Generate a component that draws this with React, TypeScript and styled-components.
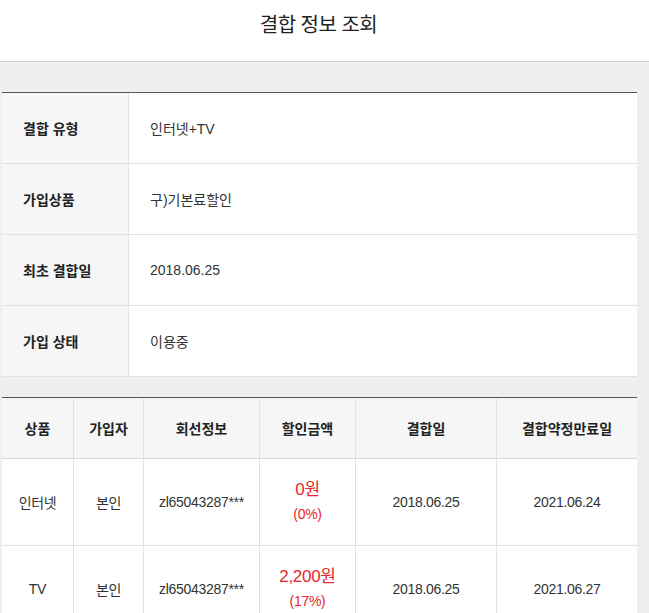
import React from 'react';
import styled, { createGlobalStyle } from 'styled-components';

const GlobalStyle = createGlobalStyle`
  * {
    box-sizing: border-box;
  }
  body {
    margin: 0;
    background: #efefef;
    font-family: "Liberation Sans", "Noto Sans CJK KR", sans-serif;
    color: #333;
  }
`;

type InfoItem = { label: string; value: string };
type Combo = {
  product: string;
  owner: string;
  line: string;
  amount: string;
  rate: string;
  joined: string;
  expires: string;
};

const info: InfoItem[] = [
  { label: '결합 유형', value: '인터넷+TV' },
  { label: '가입상품', value: '구)기본료할인' },
  { label: '최초 결합일', value: '2018.06.25' },
  { label: '가입 상태', value: '이용중' },
];

const heads = ['상품', '가입자', '회선정보', '할인금액', '결합일', '결합약정만료일'];

const combos: Combo[] = [
  {
    product: '인터넷',
    owner: '본인',
    line: 'zl65043287***',
    amount: '0원',
    rate: '(0%)',
    joined: '2018.06.25',
    expires: '2021.06.24',
  },
  {
    product: 'TV',
    owner: '본인',
    line: 'zl65043287***',
    amount: '2,200원',
    rate: '(17%)',
    joined: '2018.06.25',
    expires: '2021.06.27',
  },
];

const Header = styled.header`
  height: 62px;
  padding-right: 12px;
  background: #fff;
  border-bottom: 1px solid #cfcfcf;
  display: flex;
  justify-content: center;
  align-items: flex-start;
`;

const Title = styled.h1`
  margin: 0;
  font-size: 20px;
  font-weight: normal;
  line-height: 50px;
  color: #222;
  letter-spacing: -0.5px;
`;

const Content = styled.main`
  padding: 30px 12px 0 2px;
  display: flex;
  flex-direction: column;
  gap: 20px;
`;

const InfoBox = styled.section`
  border-top: 1px solid #555;
  background: #fff;
`;

const InfoRow = styled.div`
  display: grid;
  grid-template-columns: 127px 1fr;
  height: 71px;
  border-bottom: 1px solid #e0e0e0;
`;

const InfoLabel = styled.div`
  display: flex;
  align-items: center;
  padding-left: 21px;
  background: #f6f6f6;
  border-right: 1px solid #e3e3e3;
  font-size: 14px;
  font-weight: bold;
  color: #222;
`;

const InfoValue = styled.div`
  display: flex;
  align-items: center;
  padding-left: 21px;
  font-size: 14px;
  color: #333;
`;

const ComboBox = styled.section`
  border-top: 1px solid #555;
  background: #fff;
`;

const ComboRow = styled.div<{ $head?: boolean }>`
  display: grid;
  grid-template-columns: 72px 70px 116px 96px 141px 1fr;
  height: ${(p) => (p.$head ? '61px' : '87px')};
  background: ${(p) => (p.$head ? '#f6f6f6' : '#fff')};
  border-bottom: 1px solid ${(p) => (p.$head ? '#d6d6d6' : '#e0e0e0')};
`;

const Cell = styled.div<{ $head?: boolean }>`
  display: flex;
  flex-direction: column;
  align-items: center;
  justify-content: center;
  text-align: center;
  border-right: 1px solid #e3e3e3;
  font-size: 14px;
  font-weight: ${(p) => (p.$head ? 'bold' : 'normal')};
  color: ${(p) => (p.$head ? '#222' : '#333')};
  letter-spacing: ${(p) => (p.$head ? '0' : '-0.3px')};

  &:last-child {
    border-right: none;
  }
`;

const Amount = styled.span`
  font-size: 17px;
  line-height: 24px;
  color: #e8262b;
`;

const Rate = styled.span`
  font-size: 14px;
  line-height: 24px;
  color: #e8262b;
`;

export default function App() {
  return (
    <>
      <GlobalStyle />
      <Header>
        <Title>결합 정보 조회</Title>
      </Header>
      <Content>
        <InfoBox>
          {info.map((item) => (
            <InfoRow key={item.label}>
              <InfoLabel>{item.label}</InfoLabel>
              <InfoValue>{item.value}</InfoValue>
            </InfoRow>
          ))}
        </InfoBox>
        <ComboBox>
          <ComboRow $head>
            {heads.map((h) => (
              <Cell $head key={h}>
                {h}
              </Cell>
            ))}
          </ComboRow>
          {combos.map((c) => (
            <ComboRow key={c.product}>
              <Cell>{c.product}</Cell>
              <Cell>{c.owner}</Cell>
              <Cell>{c.line}</Cell>
              <Cell>
                <Amount>{c.amount}</Amount>
                <Rate>{c.rate}</Rate>
              </Cell>
              <Cell>{c.joined}</Cell>
              <Cell>{c.expires}</Cell>
            </ComboRow>
          ))}
        </ComboBox>
      </Content>
    </>
  );
}
